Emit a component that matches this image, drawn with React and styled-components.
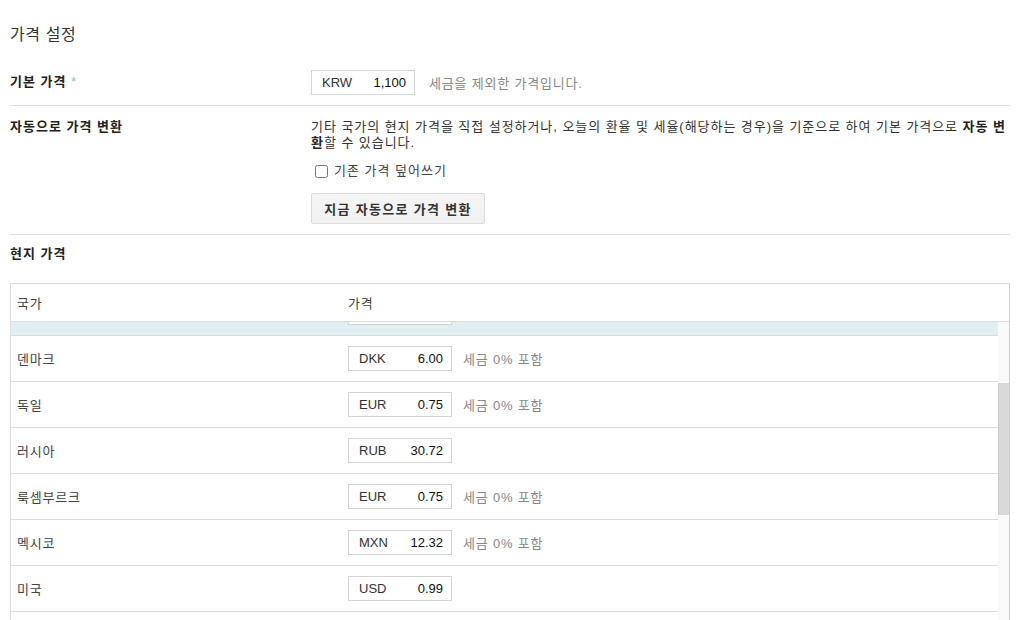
import { useEffect, useRef, useState } from "react";
import styled, { createGlobalStyle } from "styled-components";

const GlobalStyle = createGlobalStyle`
  html, body {
    margin: 0;
    padding: 0;
    background: #fff;
  }
  body {
    font-family: "Liberation Sans", Arial, "Noto Sans CJK KR", sans-serif;
    font-size: 13px;
    color: #333;
  }
`;

const countries = [
  { name: "노르웨이", cur: "NOK", price: "5.75", tax: true },
  { name: "뉴질랜드", cur: "NZD", price: "1.29", tax: true },
  { name: "대만", cur: "TWD", price: "30.00", tax: false },
  { name: "대한민국", cur: "KRW", price: "1,100", tax: false, active: true },
  { name: "덴마크", cur: "DKK", price: "6.00", tax: true },
  { name: "독일", cur: "EUR", price: "0.75", tax: true },
  { name: "러시아", cur: "RUB", price: "30.72", tax: false },
  { name: "룩셈부르크", cur: "EUR", price: "0.75", tax: true },
  { name: "멕시코", cur: "MXN", price: "12.32", tax: true },
  { name: "미국", cur: "USD", price: "0.99", tax: false },
  { name: "벨기에", cur: "EUR", price: "0.75", tax: true },
  { name: "브라질", cur: "BRL", price: "1.99", tax: false },
  { name: "스웨덴", cur: "SEK", price: "6.50", tax: true },
  { name: "스위스", cur: "CHF", price: "1.00", tax: true },
  { name: "스페인", cur: "EUR", price: "0.75", tax: true },
  { name: "영국", cur: "GBP", price: "0.69", tax: true },
  { name: "오스트리아", cur: "EUR", price: "0.75", tax: true },
  { name: "이탈리아", cur: "EUR", price: "0.75", tax: true },
  { name: "인도", cur: "INR", price: "55.00", tax: false },
  { name: "일본", cur: "JPY", price: "100", tax: true },
  { name: "캐나다", cur: "CAD", price: "0.99", tax: false },
  { name: "호주", cur: "AUD", price: "1.09", tax: true },
];

const SCROLL_TOP = 170;

export default function App() {
  const bodyRef = useRef(null);
  const [thumb, setThumb] = useState({ top: 62, height: 132 });

  useEffect(() => {
    const el = bodyRef.current;
    if (!el) return;
    el.scrollTop = SCROLL_TOP;
    const h = el.clientHeight;
    const total = el.scrollHeight;
    setThumb({
      top: Math.round((el.scrollTop / total) * h),
      height: Math.round((h / total) * h),
    });
  }, []);

  return (
    <>
      <GlobalStyle />
      <Page>
        <PageTitle>가격 설정</PageTitle>

        <FormRow $pad="8px 0 10px">
          <Label $top="4px">
            기본 가격 <Req>*</Req>
          </Label>
          <Field>
            <Inline>
              <PriceBox>
                <Cur>KRW</Cur>
                <Amount>1,100</Amount>
              </PriceBox>
              <Hint $gap="14px">세금을 제외한 가격입니다.</Hint>
            </Inline>
          </Field>
        </FormRow>

        <FormRow $pad="13px 0 10px">
          <Label $top="-2px">자동으로 가격 변환</Label>
          <Field>
            <Para>
              기타 국가의 현지 가격을 직접 설정하거나, 오늘의 환율 및
              세율(해당하는 경우)을 기준으로 하여 기본 가격으로{" "}
              <b>자동 변환</b>할 수 있습니다.
            </Para>
            <CheckLabel>
              <input type="checkbox" />
              기존 가격 덮어쓰기
            </CheckLabel>
            <Button type="button">지금 자동으로 가격 변환</Button>
          </Field>
        </FormRow>

        <SectionTitle>현지 가격</SectionTitle>

        <Table>
          <HeadRow>
            <CountryCell>국가</CountryCell>
            <PriceCell>가격</PriceCell>
          </HeadRow>
          <BodyWrap>
            <Body ref={bodyRef}>
              {countries.map((c, i) => (
                <Row key={i} $active={c.active}>
                  <CountryCell>{c.name}</CountryCell>
                  <PriceCell>
                    <PriceBox>
                      <Cur>{c.cur}</Cur>
                      <Amount>{c.price}</Amount>
                    </PriceBox>
                    {c.tax && <Hint $gap="11px">세금 0% 포함</Hint>}
                  </PriceCell>
                </Row>
              ))}
            </Body>
            <Track>
              <Thumb style={{ top: thumb.top, height: thumb.height }} />
            </Track>
          </BodyWrap>
        </Table>
      </Page>
    </>
  );
}

const Page = styled.div`
  width: 1000px;
  margin-left: 10px;
`;

const PageTitle = styled.h1`
  margin: 0;
  padding-top: 26px;
  height: 36px;
  font-size: 16px;
  line-height: 18px;
  font-weight: normal;
  letter-spacing: 0.6px;
  color: #333;
`;

const FormRow = styled.div`
  display: flex;
  padding: ${(p) => p.$pad};
  border-bottom: 1px solid #e0e0e0;
`;

const Label = styled.div`
  width: 301px;
  flex-shrink: 0;
  padding-top: ${(p) => p.$top};
  font-weight: bold;
  line-height: 16px;
  letter-spacing: 1px;
  color: #222;
`;

const Req = styled.span`
  color: #8fc3d6;
  font-weight: normal;
`;

const Field = styled.div`
  flex: 1;
  display: flex;
  flex-direction: column;
  align-items: flex-start;
`;

const Inline = styled.div`
  display: flex;
  align-items: center;
`;

const PriceBox = styled.div`
  box-sizing: border-box;
  width: 104px;
  height: 25px;
  display: flex;
  align-items: center;
  justify-content: space-between;
  padding: 0 8px 0 10px;
  border: 1px solid #d4d4d4;
  background: #fff;
  font-size: 13px;
  letter-spacing: 0;
`;

const Cur = styled.span`
  color: #333;
`;

const Amount = styled.span`
  color: #111;
`;

const Hint = styled.span`
  margin-left: ${(p) => p.$gap};
  color: #888;
  letter-spacing: 0.8px;
`;

const Para = styled.p`
  margin: 0;
  line-height: 16px;
  letter-spacing: 0.95px;
  color: #333;
  b {
    color: #222;
  }
`;

const CheckLabel = styled.label`
  display: flex;
  align-items: center;
  gap: 6px;
  margin-top: 12px;
  margin-left: 4px;
  line-height: 16px;
  letter-spacing: 1px;
  color: #444;
  input {
    margin: 0;
    width: 13px;
    height: 13px;
  }
`;

const Button = styled.button`
  margin-top: 14px;
  box-sizing: border-box;
  width: 174px;
  height: 31px;
  padding: 0;
  border: 1px solid #dcdcdc;
  border-radius: 2px;
  background: linear-gradient(#f5f5f5, #f1f1f1);
  font-family: inherit;
  font-size: 13px;
  font-weight: bold;
  letter-spacing: 1.3px;
  color: #333;
`;

const SectionTitle = styled.div`
  padding-top: 11px;
  height: 37px;
  line-height: 16px;
  font-weight: bold;
  letter-spacing: 1px;
  color: #222;
`;

const Table = styled.div`
  border: 1px solid #dcdcdc;
  border-right: 1px solid #cfcfcf;
`;

const HeadRow = styled.div`
  display: flex;
  align-items: center;
  height: 37px;
  border-bottom: 1px solid #dcdcdc;
  color: #444;
`;

const CountryCell = styled.div`
  box-sizing: border-box;
  width: 337px;
  padding-left: 6px;
  flex-shrink: 0;
  letter-spacing: 0.8px;
  color: #444;
`;

const PriceCell = styled.div`
  display: flex;
  align-items: center;
  letter-spacing: 0.8px;
  color: #444;
`;

const BodyWrap = styled.div`
  display: flex;
`;

const Body = styled.div`
  flex: 1;
  height: 365px;
  overflow: hidden;
`;

const Track = styled.div`
  position: relative;
  width: 11px;
  flex-shrink: 0;
  background: #f9f9f9;
`;

const Thumb = styled.div`
  position: absolute;
  left: 0;
  right: 0;
  box-sizing: border-box;
  background: #d9d9d9;
  border-left: 1px solid #cdcdcd;
`;

const Row = styled.div`
  display: flex;
  align-items: center;
  height: 45px;
  border-bottom: 1px solid #dcdcdc;
  background: ${(p) => (p.$active ? "#e1eff3" : "#fff")};
`;
